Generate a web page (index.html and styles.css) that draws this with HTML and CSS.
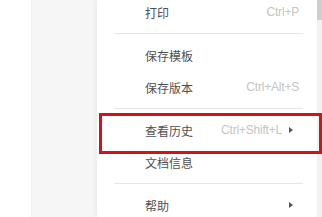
FILE: index.html
```html
<!DOCTYPE html>
<html lang="zh">
<head>
  <meta charset="UTF-8">
  <title>菜单</title>
  <link rel="stylesheet" href="styles.css">
</head>
<body>

<div class="page">
  <div class="gutter"></div>
  <div class="sidebar"></div>
  <div class="menu">
    <ul class="items">
      <li class="item"><span class="label">打印</span><span class="key">Ctrl+P</span></li>
      <li class="sep"></li>
      <li class="item"><span class="label">保存模板</span></li>
      <li class="item"><span class="label">保存版本</span><span class="key">Ctrl+Alt+S</span></li>
      <li class="sep"></li>
      <li class="item sub"><span class="label">查看历史</span><span class="key">Ctrl+Shift+L</span><span class="arrow"></span></li>
      <li class="item"><span class="label">文档信息</span></li>
      <li class="sep"></li>
      <li class="item sub"><span class="label">帮助</span><span class="arrow"></span></li>
    </ul>
  </div>
  <div class="scrollbar"><div class="thumb"></div></div>
  <div class="mark"></div>
</div>

</body>
</html>
```

FILE: styles.css
```css
* { box-sizing: border-box; margin: 0; padding: 0; }
html, body { height: 100%; overflow: hidden; }
body {
  font-family: "Liberation Sans", Arial, "Noto Sans CJK SC", sans-serif;
  font-size: 12px;
  background: #fff;
}
.page {
  position: relative;
  display: flex;
  height: 217px;
}
.gutter { width: 31px; background: #fff; }
.sidebar {
  width: 66px;
  background: #f6f6f6;
  border-left: 1px solid #f0f0f0;
}
.menu {
  width: 220px;
  background: #fff;
  box-shadow: -2px 0 4px rgba(0, 0, 0, 0.05);
  overflow: hidden;
}
.items { list-style: none; margin-top: -4px; }
.item {
  display: flex;
  align-items: center;
  height: 32px;
  padding: 0 18px 0 48px;
  color: #505050;
}
.item.sub { padding-right: 24px; }
.label { flex: 1; }
.key { color: #c4c4c4; letter-spacing: -0.2px; }
.arrow {
  width: 0;
  height: 0;
  margin-left: 7px;
  border-top: 3.5px solid transparent;
  border-bottom: 3.5px solid transparent;
  border-left: 4px solid #555;
}
.sep {
  height: 1px;
  margin: 5px 14px 5px 17px;
  background: #e6e6e6;
}
.scrollbar {
  width: 5px;
  background: #f1f1f1;
}
.thumb {
  height: 20px;
  background: #cfcfcf;
}
.mark {
  position: absolute;
  left: 99px;
  top: 113px;
  width: 223px;
  height: 41px;
  border: 3px solid #d4111a;
}
```
